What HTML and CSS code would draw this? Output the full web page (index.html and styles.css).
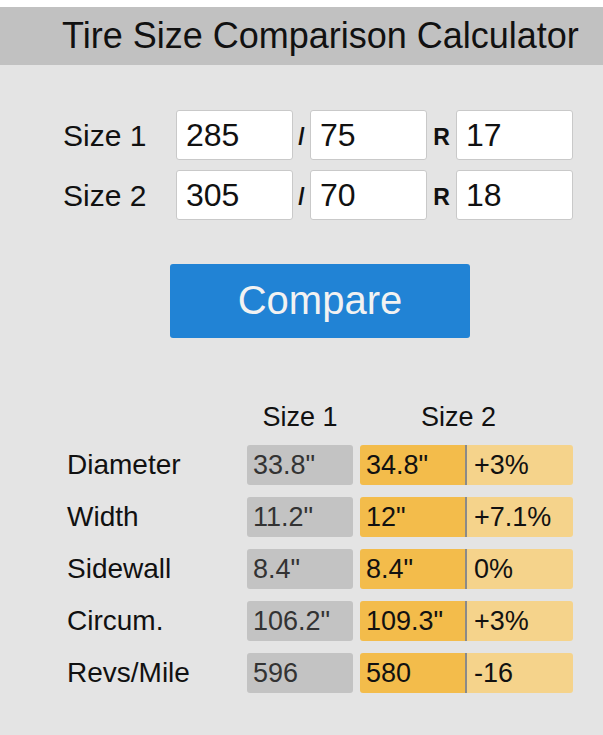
FILE: index.html
```html
<!DOCTYPE html>
<html>
<head>
<meta charset="utf-8">
<link rel="stylesheet" href="styles.css">
</head>
<body>
<div class="page">
  <header class="title-bar"><h1 class="title">Tire Size Comparison Calculator</h1></header>
  <main class="panel">
    <div class="size-form">
      <div class="size-row">
        <span class="size-label">Size 1</span>
        <span class="field">285</span>
        <span class="sep sep-slash">/</span>
        <span class="field">75</span>
        <span class="sep sep-r">R</span>
        <span class="field">17</span>
      </div>
      <div class="size-row">
        <span class="size-label">Size 2</span>
        <span class="field">305</span>
        <span class="sep sep-slash">/</span>
        <span class="field">70</span>
        <span class="sep sep-r">R</span>
        <span class="field">18</span>
      </div>
    </div>
    <div class="btn-wrap"><button class="compare-btn">Compare</button></div>
    <div class="results">
      <div class="res-head">
        <span class="res-label"></span>
        <span class="head-1">Size 1</span>
        <span class="head-2">Size 2</span>
      </div>
      <div class="res-row">
        <span class="res-label">Diameter</span>
        <span class="cell-gray">33.8"</span>
        <span class="cell-pair"><span class="cell-orange">34.8"</span><span class="cell-diff">+3%</span></span>
      </div>
      <div class="res-row">
        <span class="res-label">Width</span>
        <span class="cell-gray">11.2"</span>
        <span class="cell-pair"><span class="cell-orange">12"</span><span class="cell-diff">+7.1%</span></span>
      </div>
      <div class="res-row">
        <span class="res-label">Sidewall</span>
        <span class="cell-gray">8.4"</span>
        <span class="cell-pair"><span class="cell-orange">8.4"</span><span class="cell-diff">0%</span></span>
      </div>
      <div class="res-row">
        <span class="res-label">Circum.</span>
        <span class="cell-gray">106.2"</span>
        <span class="cell-pair"><span class="cell-orange">109.3"</span><span class="cell-diff">+3%</span></span>
      </div>
      <div class="res-row">
        <span class="res-label">Revs/Mile</span>
        <span class="cell-gray">596</span>
        <span class="cell-pair"><span class="cell-orange">580</span><span class="cell-diff">-16</span></span>
      </div>
    </div>
  </main>
</div>
</body>
</html>
```

FILE: styles.css
```css
html, body {
  margin: 0;
  padding: 0;
  background: #ffffff;
}
body {
  font-family: "Liberation Sans", Arial, sans-serif;
  color: #111111;
}
.page {
  padding-top: 7px;
}
.title-bar {
  background: #c1c1c1;
  height: 58px;
}
.title {
  margin: 0;
  padding-left: 62px;
  font-weight: normal;
  font-size: 36px;
  line-height: 58px;
  color: #111111;
  white-space: nowrap;
}
.panel {
  background: #e4e4e4;
  height: 670px;
  padding-top: 45px;
  box-sizing: border-box;
}
.size-form {
  display: flex;
  flex-direction: column;
  gap: 10px;
  padding-left: 63px;
}
.size-row {
  display: flex;
  align-items: center;
  height: 50px;
}
.size-label {
  width: 113px;
  font-size: 30px;
  padding-top: 1px;
}
.field {
  box-sizing: border-box;
  width: 117px;
  height: 50px;
  background: #ffffff;
  border: 1px solid #c9c9c9;
  border-radius: 3px;
  font-size: 32px;
  line-height: 48px;
  padding-left: 9px;
}
.sep {
  font-weight: bold;
  font-size: 23px;
  display: flex;
  justify-content: center;
  padding-top: 4px;
}
.sep-slash {
  width: 17px;
}
.sep-r {
  width: 29px;
}
.btn-wrap {
  padding-top: 44px;
  padding-left: 170px;
}
.compare-btn {
  display: block;
  width: 300px;
  height: 74px;
  border: none;
  border-radius: 3px;
  background: #2183d5;
  color: #f2f2f2;
  font-family: "Liberation Sans", Arial, sans-serif;
  font-size: 40px;
  padding: 0 0 2px 0;
}
.results {
  padding-top: 64px;
  padding-left: 67px;
  display: flex;
  flex-direction: column;
  gap: 12px;
}
.res-head {
  display: flex;
  font-size: 27px;
  line-height: 31px;
}
.res-label {
  width: 180px;
  font-size: 28px;
}
.head-1 {
  width: 106px;
  text-align: center;
}
.head-2 {
  margin-left: 7px;
  width: 197px;
  text-align: center;
}
.res-row {
  display: flex;
  align-items: center;
  height: 40px;
  font-size: 27px;
}
.cell-gray {
  box-sizing: border-box;
  width: 106px;
  height: 40px;
  line-height: 40px;
  background: #c3c3c3;
  border-radius: 3px;
  padding-left: 6px;
  color: #333333;
}
.cell-pair {
  display: flex;
  margin-left: 7px;
  width: 213px;
  height: 40px;
  line-height: 40px;
  border-radius: 3px;
  overflow: hidden;
}
.cell-orange {
  box-sizing: border-box;
  width: 107px;
  background: #f3bc4b;
  border-right: 2px solid #8a8a8a;
  padding-left: 6px;
}
.cell-diff {
  flex: 1;
  background: #f5d38b;
  padding-left: 7px;
}
```
